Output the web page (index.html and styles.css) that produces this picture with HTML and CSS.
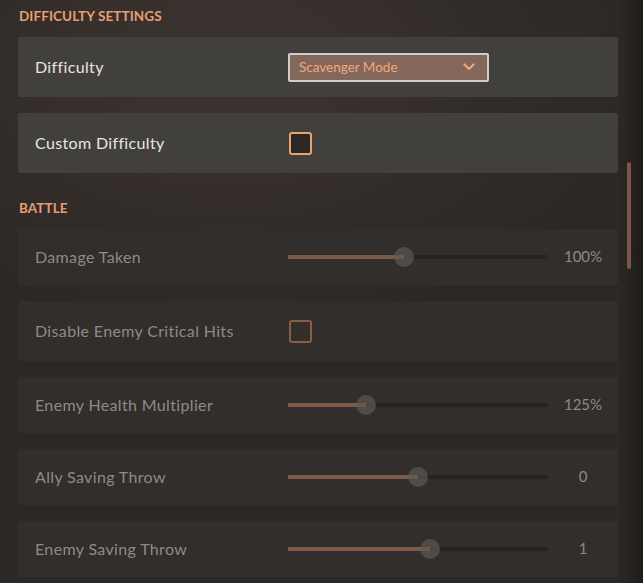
FILE: index.html
```html
<!DOCTYPE html>
<html lang="en">

<head>
    <meta charset="UTF-8">
    <meta name="viewport" content="width=device-width, initial-scale=1.0">
    <title>Settings</title>
    <link rel="stylesheet" href="styles.css">
</head>

<body>
    <div class="layout">
        <div class="settings">
            <div class="group-title first">Difficulty Settings</div>
            <div class="row active">
                <div class="label">Difficulty</div>
                <div class="select">
                    <span>Scavenger Mode</span>
                    <svg width="12" height="8" viewBox="0 0 12 8">
                        <path d="M1.5 1.5 L6 6 L10.5 1.5" fill="none" stroke="#eca77a" stroke-width="2.2" stroke-linecap="round" stroke-linejoin="round"/>
                    </svg>
                </div>
            </div>
            <div class="row active">
                <div class="label">Custom Difficulty</div>
                <div class="check"></div>
            </div>

            <div class="group-title">Battle</div>
            <div class="row slim">
                <div class="label">Damage Taken</div>
                <div class="slider"><div class="fill" style="width: 116px"></div><div class="thumb" style="left: 116px"></div></div>
                <div class="value">100%</div>
            </div>
            <div class="row">
                <div class="label">Disable Enemy Critical Hits</div>
                <div class="check off"></div>
            </div>
            <div class="row slim">
                <div class="label">Enemy Health Multiplier</div>
                <div class="slider"><div class="fill" style="width: 78px"></div><div class="thumb" style="left: 78px"></div></div>
                <div class="value">125%</div>
            </div>
            <div class="row slim">
                <div class="label">Ally Saving Throw</div>
                <div class="slider"><div class="fill" style="width: 130px"></div><div class="thumb" style="left: 130px"></div></div>
                <div class="value">0</div>
            </div>
            <div class="row slim">
                <div class="label">Enemy Saving Throw</div>
                <div class="slider"><div class="fill" style="width: 142px"></div><div class="thumb" style="left: 142px"></div></div>
                <div class="value">1</div>
            </div>
        </div>
        <div class="scrollbar"></div>
    </div>
</body>

</html>
```

FILE: styles.css
```css
html, body {
    margin: 0;
    height: 100%;
}
body {
    font-family: Lato, "Noto Sans", sans-serif;
    background:
        linear-gradient(to right, rgba(0,0,0,0) 0, rgba(0,0,0,0) 618px, rgba(0,0,0,0.12) 628px, rgba(0,0,0,0.35) 643px),
        radial-gradient(ellipse 420px 260px at 230px 70px, #3d3430 0%, rgba(61,52,48,0) 100%),
        #2c2825;
    overflow: hidden;
}
.layout {
    position: relative;
    height: 100%;
}
.settings {
    width: 600px;
    padding: 6px 0 0 18px;
}

/* section headings */
.group-title {
    height: 20px;
    line-height: 20px;
    margin: 25px 0 11px 1px;
    font-size: 13.5px;
    font-weight: 700;
    letter-spacing: 0.1px;
    text-transform: uppercase;
    color: #e59f70;
}
.group-title.first {
    margin-top: 0;
}

/* one setting */
.row {
    display: grid;
    grid-template-columns: 253px 260px 70px;
    align-items: center;
    height: 60px;
    padding-left: 17px;
    margin-bottom: 16px;
    border-radius: 2px;
    background: #312e2c;
}
.row.slim {
    height: 56px;
}
.row.active {
    background: #42403d;
}
.label {
    margin-top: -2px;
    font-size: 16px;
    letter-spacing: 0.35px;
    color: #8f8a86;
}
.row.active .label {
    color: #e9e5e1;
}

/* dropdown */
.select {
    display: flex;
    align-items: center;
    justify-content: space-between;
    box-sizing: border-box;
    width: 201px;
    height: 29px;
    padding: 0 12px 0 9px;
    border: 2px solid #d2cdc8;
    border-radius: 2px;
    background: #84675b;
    font-size: 13.5px;
    color: #eea97c;
}

/* checkbox */
.check {
    box-sizing: border-box;
    width: 23px;
    height: 23px;
    margin-left: 1px;
    border: 2px solid #eaa272;
    border-radius: 3px;
    background: #2a2725;
}
.check.off {
    border-color: #8a5e45;
    background: transparent;
}

/* slider */
.slider {
    position: relative;
    height: 4px;
    background: #262321;
}
.slider .fill {
    height: 100%;
    background: #7d5a45;
}
.slider .thumb {
    position: absolute;
    top: -8px;
    width: 20px;
    height: 20px;
    margin-left: -10px;
    border-radius: 50%;
    background: rgba(95, 91, 88, 0.65);
}
.value {
    margin-top: -2px;
    text-align: center;
    font-size: 15px;
    color: #8f8a86;
}

.scrollbar {
    position: absolute;
    left: 627px;
    top: 162px;
    width: 4px;
    height: 107px;
    border-radius: 2px;
    background: #7a5744;
}
```
